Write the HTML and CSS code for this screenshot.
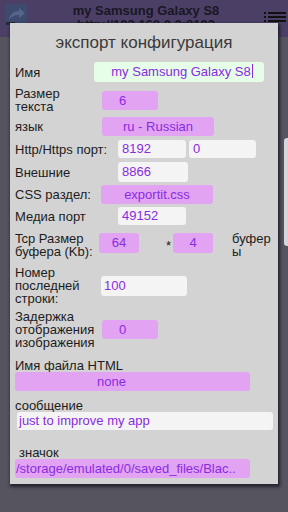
FILE: index.html
```html
<!DOCTYPE html>
<html lang="ru">
<head>
<meta charset="utf-8">
<link rel="stylesheet" href="styles.css">
</head>
<body>
<div class="screen">
  <header class="bar">
    <svg class="app-icon" width="24" height="24" viewBox="0 0 24 24">
      <rect x="1" y="1" width="22" height="22" rx="3" fill="#3f4b6e"/>
      <path d="M5 17 C6 11 10 8 15 8 L15 5 L21 10 L15 15 L15 12 C11 12 8 13 5 17 Z" fill="#56658c"/>
      <rect x="2" y="19" width="9" height="3" fill="#262a36"/>
    </svg>
    <div class="bar-title">
      <div class="bar-name">my Samsung Galaxy S8</div>
      <div class="bar-url">http://192.168.0.2:8192</div>
    </div>
    <svg class="menu-icon" width="22" height="12" viewBox="0 0 22 12">
      <rect x="0" y="0" width="2" height="2" fill="#111"/>
      <rect x="4" y="0" width="18" height="2" fill="#111"/>
      <rect x="0" y="4" width="2" height="2" fill="#111"/>
      <rect x="4" y="4" width="18" height="2" fill="#111"/>
      <rect x="0" y="8" width="2" height="2" fill="#111"/>
      <rect x="4" y="8" width="18" height="2" fill="#111"/>
    </svg>
  </header>
  <div class="content">
    <div class="side-card"></div>
  </div>

  <div class="dialog">
    <div class="dlg-title">экспорт конфигурация</div>

    <div class="row r-name">
      <div class="lbl w79">Имя</div>
      <div class="field green wide">my Samsung Galaxy S8<span class="caret"></span></div>
    </div>

    <div class="row r-size">
      <div class="lbl w87">Размер<br>текста</div>
      <div class="field purple small pad-l">6</div>
    </div>

    <div class="row r-lang">
      <div class="lbl w87">язык</div>
      <div class="field purple mid">ru - Russian</div>
    </div>

    <div class="row r-http">
      <div class="lbl w103">Http/Https порт:</div>
      <div class="field white port">8192</div>
      <div class="field white port2">0</div>
    </div>

    <div class="row r-ext">
      <div class="lbl w103">Внешние</div>
      <div class="field white port tall">8866</div>
    </div>

    <div class="row r-css">
      <div class="lbl w86">CSS раздел:</div>
      <div class="field purple mid">exportit.css</div>
    </div>

    <div class="row r-media">
      <div class="lbl w103">Медиа порт</div>
      <div class="field white port">49152</div>
    </div>

    <div class="row r-tcp">
      <div class="lbl w84">Tcp Размер<br>буфера (Kb):</div>
      <div class="field purple buf">64</div>
      <div class="star">*</div>
      <div class="field purple buf">4</div>
      <div class="lbl unit">буфер<br>ы</div>
    </div>

    <div class="row r-line">
      <div class="lbl w86">Номер<br>последней<br>строки:</div>
      <div class="field white line">100</div>
    </div>

    <div class="row r-delay">
      <div class="lbl w87">Задержка<br>отображения<br>изображения</div>
      <div class="field purple small pad-l">0</div>
    </div>

    <div class="block r-html">
      <div class="lbl">Имя файла HTML</div>
      <div class="field purple long none">none</div>
    </div>

    <div class="block r-msg">
      <div class="lbl">сообщение</div>
      <div class="field white msg">just to improve my app</div>
    </div>

    <div class="block r-icon">
      <div class="lbl indent">значок</div>
      <div class="field purple long path">/storage/emulated/0/saved_files/Blac..</div>
    </div>
  </div>
</div>
</body>
</html>
```
FILE: styles.css
```css
* { box-sizing: border-box; }
html, body { margin: 0; padding: 0; }
body {
  width: 288px;
  height: 512px;
  overflow: hidden;
  font-family: "Liberation Sans", Arial, sans-serif;
  background: #55545f;
}
.screen {
  position: relative;
  width: 288px;
  height: 512px;
  display: flex;
  flex-direction: column;
}
.bar {
  height: 37px;
  background: #4b3f66;
  display: flex;
  align-items: flex-start;
  padding: 3px 4px 0 4px;
}
.app-icon { flex: none; }
.bar-title {
  flex: 1;
  text-align: center;
  color: #1a1724;
  font-size: 13px;
  line-height: 14px;
  padding-top: 1px;
}
.bar-name { font-weight: bold; }
.bar-url { font-weight: bold; }
.menu-icon { flex: none; margin-top: 9px; margin-right: -2px; }
.content {
  flex: 1;
  background: #55545f;
  position: relative;
}
.side-card {
  position: absolute;
  right: 0;
  top: 101px;
  width: 4px;
  height: 108px;
  background: #d6d6da;
  border-radius: 3px 0 0 3px;
}

.dialog {
  position: absolute;
  left: 10px;
  top: 23px;
  width: 268px;
  height: 461px;
  background: #d3d3d3;
  box-shadow: 1px 2px 3px 1px rgba(20, 20, 28, 0.75);
  padding: 0 0 0 5px;
  color: #1c1c1c;
  font-size: 13px;
}
.dlg-title {
  text-align: center;
  font-size: 17px;
  color: #3a3a3a;
  height: 39px;
  line-height: 40px;
  padding-right: 5px;
}
.row {
  display: flex;
  align-items: center;
}
.lbl {
  flex: none;
  line-height: 13px;
  color: #1c1c1c;
}
.w79 { width: 79px; }
.w84 { width: 84px; }
.w86 { width: 86px; }
.w87 { width: 87px; }
.w103 { width: 103px; }

.field {
  flex: none;
  height: 19px;
  line-height: 19px;
  border-radius: 3px;
  color: #8a2be2;
  font-size: 13px;
  white-space: nowrap;
  overflow: hidden;
}
.green { background: #e6fde7; }
.purple { background: #e2a3f2; }
.white { background: #f4f4f4; }

.wide { width: 170px; height: 20px; line-height: 20px; text-align: center; position: relative; padding-left: 6px; }
.caret {
  display: inline-block;
  width: 1px;
  height: 14px;
  background: #8a2be2;
  vertical-align: -2px;
  margin-left: 1px;
}
.small { width: 56px; }
.pad-l { padding-left: 17px; }
.mid { width: 112px; text-align: center; }
.port { width: 68px; padding-left: 4px; height: 18px; line-height: 18px; }
.port2 { width: 67px; margin-left: 3px; padding-left: 4px; height: 18px; line-height: 18px; }
.tall { width: 70px; height: 20px; line-height: 20px; }
.buf { width: 40px; height: 20px; line-height: 20px; text-align: center; align-self: flex-start; margin-top: 1px; }
.star { width: 34px; text-align: right; padding-right: 2px; font-size: 13px; padding-top: 6px; color: #1c1c1c; }
.unit { margin-left: 19px; align-self: flex-start; }
.line { width: 86px; height: 20px; line-height: 20px; padding-left: 3px; }

.r-name { margin-top: 0; }
.r-size { margin-top: 5px; }
.r-lang { margin-top: 4px; }
.r-http { margin-top: 4px; }
.r-ext { margin-top: 4px; }
.r-css { margin-top: 3px; }
.r-media { margin-top: 3px; }
.r-tcp { margin-top: 7px; align-items: flex-start; }
.r-line { margin-top: 8px; }
.r-delay { margin-top: 5px; }

.block { display: flex; flex-direction: column; align-items: flex-start; }
.r-html { margin-top: 10px; }
.r-msg { margin-top: 8px; }
.r-icon { margin-top: 16px; }
.long { width: 235px; }
.none { padding-left: 82px; }
.msg { width: 256px; margin-left: 2px; height: 18px; line-height: 18px; padding-left: 2px; }
.indent { padding-left: 4px; }
.path { padding-left: 1px; }
```
